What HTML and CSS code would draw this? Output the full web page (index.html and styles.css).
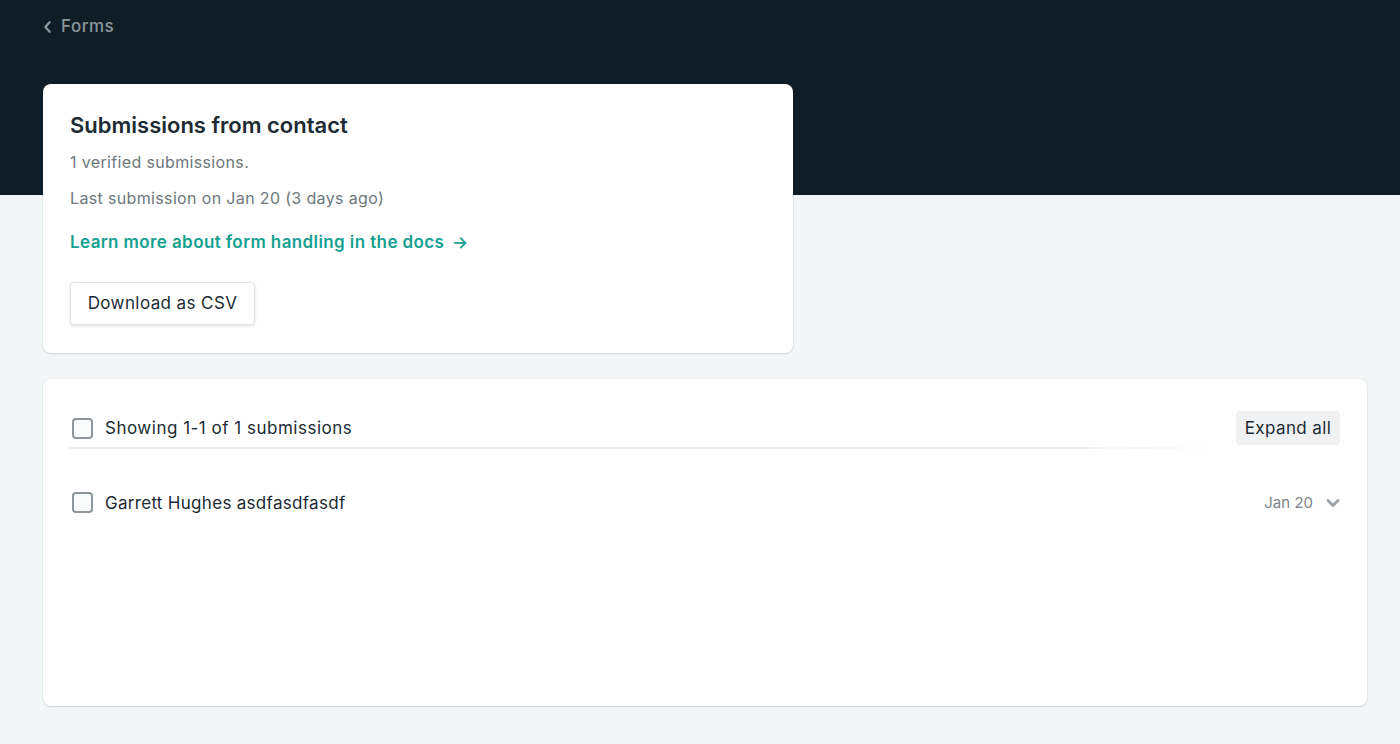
FILE: index.html
```html
<!DOCTYPE html>
<html lang="en">
<head>
<meta charset="utf-8">
<title>Submissions from contact</title>
<link rel="stylesheet" href="styles.css">
</head>
<body>
<div class="page">
  <a class="back" href="#">
    <svg class="back-icon" viewBox="0 0 10 14" width="9" height="12"><path d="M7.5 1.5 L2.5 7 L7.5 12.5" fill="none" stroke="currentColor" stroke-width="2.6" stroke-linecap="round" stroke-linejoin="round"/></svg>
    <span>Forms</span>
  </a>

  <section class="card summary">
    <h1 class="title">Submissions from contact</h1>
    <p class="meta">1 verified submissions.</p>
    <p class="meta meta-last">Last submission on Jan 20 (3 days ago)</p>
    <a class="docs-link" href="#">Learn more about form handling in the docs <span class="arrow">→</span></a>
    <button class="btn-csv" type="button">Download as CSV</button>
  </section>

  <section class="card list">
    <div class="list-head">
      <div class="head-left">
        <span class="checkbox"></span>
        <span class="head-text">Showing 1-1 of 1 submissions</span>
      </div>
      <button class="btn-expand" type="button">Expand all</button>
    </div>
    <div class="row">
      <span class="checkbox"></span>
      <span class="row-text">Garrett Hughes asdfasdfasdf</span>
      <span class="row-date">Jan 20</span>
      <svg class="chev" viewBox="0 0 14 10" width="14" height="10"><path d="M2 2.5 L7 7.5 L12 2.5" fill="none" stroke="currentColor" stroke-width="2.8" stroke-linecap="round" stroke-linejoin="round"/></svg>
    </div>
  </section>
</div>
</body>
</html>
```

FILE: styles.css
```css
html, body {
  margin: 0;
  padding: 0;
}
body {
  font-family: Inter, "Noto Sans", "Liberation Sans", sans-serif;
  background: linear-gradient(to bottom, #0f1e26 0, #0f1e26 195px, #f3f6f7 195px, #f3f6f7 100%);
  min-height: 744px;
  color: #1c2b33;
}
.page {
  padding: 16px 33px 0 43px;
}
.back {
  display: inline-flex;
  align-items: center;
  gap: 9px;
  color: #8b969c;
  text-decoration: none;
  font-size: 17px;
  line-height: 20px;
  font-weight: 500;
  letter-spacing: 0.5px;
}
.back-icon {
  color: #8b969c;
  margin-top: 1px;
}
.card {
  background: #fff;
  border-radius: 8px;
  box-shadow: 0 1px 2px rgba(15, 30, 38, 0.14), 0 0 0 1px rgba(15, 30, 38, 0.03);
  box-sizing: border-box;
}
.summary {
  width: 750px;
  height: 269px;
  margin-top: 47px;
  padding: 27px 27px 27px;
  display: flex;
  flex-direction: column;
  align-items: flex-start;
}
.title {
  margin: 0;
  font-size: 22px;
  line-height: 28px;
  font-weight: 600;
  letter-spacing: 0;
  color: #1c2b33;
}
.meta {
  margin: 11px 0 0;
  font-size: 16px;
  line-height: 24px;
  color: #6e777c;
  letter-spacing: 0.35px;
}
.meta-last {
  margin-top: 12px;
}
.docs-link {
  margin-top: 20px;
  font-size: 17px;
  line-height: 24px;
  font-weight: 600;
  letter-spacing: 0.4px;
  color: #15a191;
  text-decoration: none;
}
.arrow {
  margin-left: 3px;
}
.btn-csv {
  margin-top: 28px;
  height: 43px;
  width: 185px;
  background: #fff;
  border: 1px solid #e1e4e6;
  border-radius: 4px;
  box-shadow: 0 1px 3px rgba(15, 30, 38, 0.14);
  font-family: inherit;
  font-size: 17px;
  letter-spacing: 0.4px;
  color: #1c2b33;
  padding: 0;
}
.list {
  margin-top: 26px;
  height: 327px;
  padding: 32px 27px 0 26px;
}
.list-head {
  display: flex;
  align-items: flex-start;
  gap: 21px;
}
.head-left {
  flex: 1;
  display: flex;
  align-items: center;
  gap: 12px;
  height: 38px;
  padding-left: 3px;
  border-bottom: 2px solid transparent;
  border-image: linear-gradient(to right, #eef0f1 0%, #eef0f1 88%, rgba(238, 240, 241, 0) 100%) 1;
  box-sizing: border-box;
  padding-bottom: 1px;
}
.checkbox {
  width: 17px;
  height: 17px;
  border: 2px solid #8d969b;
  border-radius: 4px;
  background: #fafbfb;
  flex: none;
}
.head-text, .row-text {
  font-size: 17px;
  line-height: 24px;
  color: #1c2b33;
  letter-spacing: 0.5px;
}
.row-text {
  letter-spacing: 0.3px;
}
.btn-expand {
  height: 34px;
  width: 104px;
  background: #eff1f2;
  border: none;
  border-radius: 4px;
  font-family: inherit;
  font-size: 17px;
  letter-spacing: 0.4px;
  color: #1c2b33;
  padding: 0;
}
.row {
  display: flex;
  align-items: center;
  gap: 12px;
  margin-top: 42px;
  padding-left: 3px;
}
.row-text {
  flex: 1;
}
.row-date {
  font-size: 15px;
  color: #7c8589;
}
.chev {
  color: #9aa2a6;
  margin-left: 1px;
}
```
